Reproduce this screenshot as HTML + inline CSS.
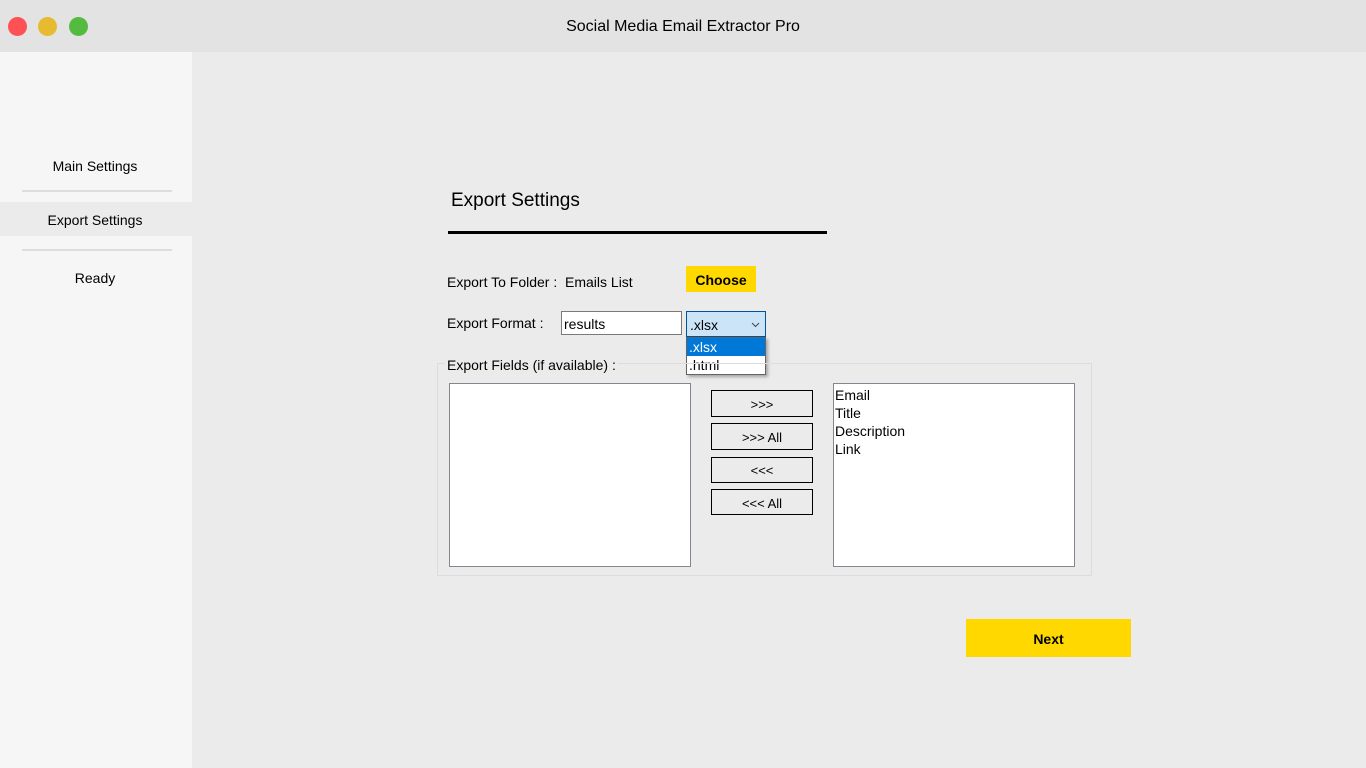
<!DOCTYPE html>
<html><head><style>
*{margin:0;padding:0;box-sizing:border-box}
body{width:1366px;height:768px;background:#ebebeb;font-family:"Liberation Sans",sans-serif;position:relative;overflow:hidden;color:#000}
.a{position:absolute}
.t{font-size:14px;white-space:nowrap}
.btn{position:absolute;left:711px;width:102px;border:1px solid #000;background:#ebebeb;font-size:13px;text-align:center}
</style></head><body>
<div class="a" style="left:0;top:0;width:1366px;height:52px;background:#e3e3e3"></div>
<div class="a" style="left:8px;top:17px;width:19px;height:19px;border-radius:50%;background:#fe5155"></div>
<div class="a" style="left:38px;top:17px;width:19px;height:19px;border-radius:50%;background:#e6bb30"></div>
<div class="a" style="left:69px;top:17px;width:19px;height:19px;border-radius:50%;background:#55bb40"></div>
<div class="a t" style="left:0;width:1366px;top:18px;text-align:center;font-size:16px">Social Media Email Extractor Pro</div>
<div class="a" style="left:0;top:52px;width:192px;height:716px;background:#f6f6f6"></div>
<div class="a t" style="left:0;width:190px;top:158px;text-align:center">Main Settings</div>
<div class="a" style="left:22px;top:190px;width:150px;height:2px;background:#ddd"></div>
<div class="a" style="left:0;top:202px;width:192px;height:34px;background:#ebebeb"></div>
<div class="a t" style="left:0;width:190px;top:212px;text-align:center">Export Settings</div>
<div class="a" style="left:22px;top:249px;width:150px;height:2px;background:#ddd"></div>
<div class="a t" style="left:0;width:190px;top:270px;text-align:center">Ready</div>
<div class="a t" style="left:451px;top:190px;font-size:19px">Export Settings</div>
<div class="a" style="left:448px;top:231px;width:379px;height:3px;background:#000"></div>
<div class="a t" style="left:447px;top:274px">Export To Folder :&nbsp;&nbsp;Emails List</div>
<div class="a" style="left:686px;top:266px;width:70px;height:26px;background:#ffd800;font-weight:bold;font-size:14px;text-align:center;line-height:29px">Choose</div>
<div class="a t" style="left:447px;top:315px">Export Format :</div>
<div class="a" style="left:561px;top:311px;width:121px;height:24px;background:#fff;border:1px solid #7a7a7a;font-size:14px;padding:4px 2px 0">results</div>
<div class="a" style="left:686px;top:311px;width:80px;height:26px;background:#cce4f7;border:1px solid #005499;font-size:14px;padding:5px 3px 0">.xlsx<svg style="position:absolute;right:5px;top:10px" width="9" height="6"><path d="M1 1L4.5 4.5L8 1" fill="none" stroke="#444" stroke-width="1"/></svg></div>
<div class="a" style="left:686px;top:337px;width:80px;height:38px;background:#fff;border:1px solid #646464;box-shadow:2px 2px 3px rgba(0,0,0,.3);font-size:14px;line-height:18px">
<div style="background:#0078d7;color:#fff;height:18px;padding:0 2px">.xlsx</div><div style="padding:0 2px">.html</div></div>
<div class="a" style="left:437px;top:363px;width:655px;height:213px;border:1px solid #dcdcdc"></div>
<div class="a t" style="left:445px;top:357px;background:#ebebeb;padding:0 2px">Export Fields (if available) :</div>
<div class="a" style="left:449px;top:383px;width:242px;height:184px;background:#fff;border:1px solid #828790"></div>
<div class="a" style="left:833px;top:383px;width:242px;height:184px;background:#fff;border:1px solid #828790;font-size:14px;line-height:18px;padding:2px 1px">Email<br>Title<br>Description<br>Link</div>
<div class="btn" style="top:390px;height:27px;line-height:27px">&gt;&gt;&gt;</div>
<div class="btn" style="top:423px;height:27px;line-height:27px">&gt;&gt;&gt; All</div>
<div class="btn" style="top:457px;height:26px;line-height:26px">&lt;&lt;&lt;</div>
<div class="btn" style="top:489px;height:26px;line-height:28px">&lt;&lt;&lt; All</div>
<div class="a" style="left:966px;top:619px;width:165px;height:38px;background:#ffd800;font-weight:bold;font-size:14px;text-align:center;line-height:40px">Next</div>
</body></html>
